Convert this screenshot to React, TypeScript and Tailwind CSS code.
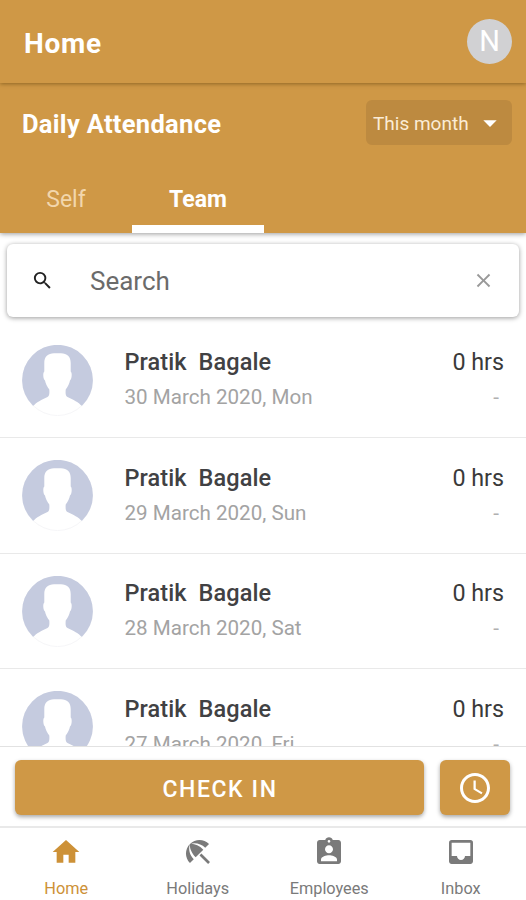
import React from 'react';
import {
  MdAccessTime,
  MdArrowDropDown,
  MdAssignmentInd,
  MdBeachAccess,
  MdClose,
  MdHome,
  MdInbox,
  MdSearch,
} from 'react-icons/md';

const records = [
  { date: '30 March 2020, Mon', hours: '0 hrs' },
  { date: '29 March 2020, Sun', hours: '0 hrs' },
  { date: '28 March 2020, Sat', hours: '0 hrs' },
  { date: '27 March 2020, Fri', hours: '0 hrs' },
];

const navItems = [
  { label: 'Home', icon: MdHome, active: true },
  { label: 'Holidays', icon: MdBeachAccess, active: false },
  { label: 'Employees', icon: MdAssignmentInd, active: false },
  { label: 'Inbox', icon: MdInbox, active: false },
];

const Avatar: React.FC = () => (
  <svg viewBox="0 0 71 71" className="w-[71px] h-[71px] shrink-0">
    <circle cx="35.5" cy="35.5" r="35" fill="#fff" stroke="#f6f6f8" />
    <path d="M11 60.8A35.4 35.4 0 1 1 60 60.8Z" fill="#c5cbdf" />
    <path
      d="M11 61.3C14 57.5 20 54.5 25.5 52C27.3 51 27.6 49 27.3 44.5C25 41.5 23.6 38.5 23 35.5C21.2 34.5 20.6 27.5 22.3 26.500V18C22.3 11.5 26 8.500 32 8.300H39C45 8.500 48.700 11.500 48.700 18V26.500C50.4 27.5 49.8 34.5 48 35.5C47.4 38.5 46 41.5 43.7 44.500C43.4 49 43.7 51 45.500 52C51 54.500 57 57.500 60 61.300Z"
      fill="#fff"
    />
  </svg>
);

const Header: React.FC = () => (
  <header className="relative z-20 flex h-[83px] shrink-0 items-center justify-between bg-[#cf9846] pl-6 pr-3.5 shadow-[0_1px_4px_rgba(90,60,10,0.55)]">
    <h1 className="pt-1 text-[28px] font-bold tracking-[0.7px] text-white">Home</h1>
    <div className="flex h-[45px] w-[45px] items-center justify-center rounded-full bg-[#d1d1d3] pt-px text-[29px] text-white">
      N
    </div>
  </header>
);

const AttendanceBar: React.FC = () => (
  <section className="relative z-10 flex h-[150px] shrink-0 flex-col justify-between bg-[#cf9846] shadow-[0_1px_5px_rgba(0,0,0,0.4)]">
    <div className="flex items-center justify-between pl-[22px] pr-3.5 pt-[17px]">
      <h2 className="pt-1 text-[25.500px] font-bold tracking-[0.3px] text-white">Daily Attendance</h2>
      <button className="flex h-[45px] w-[146px] items-center justify-between rounded-md bg-[#bd8a40] pl-[7px] pr-1.5 text-[19px] text-[#fbecd6]">
        <span className="pt-[3px]">This month</span>
        <MdArrowDropDown className="h-8 w-8 text-white" />
      </button>
    </div>
    <div className="flex">
      <button className="h-[67px] w-[132px] border-b-8 border-transparent pt-2.5 text-[23px] text-[#f2d6ac]">
        Self
      </button>
      <button className="h-[67px] w-[132px] border-b-8 border-white pt-2.5 text-[23px] font-bold text-white">
        Team
      </button>
    </div>
  </section>
);

const SearchBox: React.FC = () => (
  <div className="mx-[7px] mt-[11px] flex h-[73px] shrink-0 items-center rounded-md bg-white pl-6 pr-6 shadow-[0_1px_5px_rgba(0,0,0,0.4)]">
    <MdSearch className="h-[23px] w-[23px] text-[#222]" />
    <span className="ml-9 flex-1 pt-px text-[26px] text-[#6b6b6b]">Search</span>
    <MdClose className="h-[23px] w-[23px] text-[#999]" />
  </div>
);

const App: React.FC = () => {
  return (
    <div className="flex h-[900px] w-[526px] flex-col overflow-hidden bg-white font-['Roboto',sans-serif]">
      <Header />
      <AttendanceBar />

      <main className="flex min-h-0 flex-1 flex-col overflow-hidden">
        <SearchBox />
        <ul className="mt-[5.500px]">
          {records.map((record) => (
            <li
              key={record.date}
              className="flex h-[115.500px] items-center border-b border-[#e9e9e9] pl-[22px] pr-[22px] pt-px"
            >
              <Avatar />
              <div className="ml-[31.500px] flex-1">
                <p className="whitespace-pre text-[23.500px] font-medium leading-[35px] tracking-[0.1px] text-[#414143]">
                  {'Pratik  Bagale'}
                </p>
                <p className="text-[20.600px] leading-[35px] text-[#a3a3a3]">{record.date}</p>
              </div>
              <div className="text-right">
                <p className="text-[23.300px] leading-[35px] text-[#3a3a3a]">{record.hours}</p>
                <p className="pr-[5px] text-[20.600px] leading-[35px] text-[#b0b0b0]">-</p>
              </div>
            </li>
          ))}
        </ul>
      </main>

      <div className="flex h-[80px] shrink-0 gap-4 border-t border-[#e2e2e2] bg-white px-[15px] pt-[13px]">
        <button className="h-[55px] w-[409px] rounded-md bg-[#cf9846] pl-px pt-[5px] text-[23px] font-medium tracking-[1.600px] text-white shadow-[0_2px_4px_rgba(0,0,0,0.35)]">
          CHECK IN
        </button>
        <button className="flex h-[55px] w-[70px] items-center justify-center rounded-md bg-[#cf9846] text-white shadow-[0_2px_4px_rgba(0,0,0,0.35)]">
          <MdAccessTime className="h-9 w-9" />
        </button>
      </div>

      <nav className="grid h-[74px] shrink-0 grid-cols-4 border-t-2 border-[#e9e9e9] bg-white">
        {navItems.map(({ label, icon: Icon, active }) => (
          <a
            key={label}
            className={`flex flex-col items-center pt-2 pl-px ${active ? 'text-[#cd9137]' : 'text-[#7a7a7a]'}`}
          >
            <Icon className="h-8 w-8" />
            <span className="mt-[9px] text-[16.300px] leading-6">{label}</span>
          </a>
        ))}
      </nav>
    </div>
  );
};

export default App;
